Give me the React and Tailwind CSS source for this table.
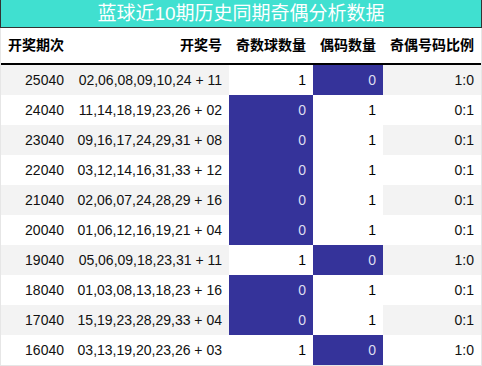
const rows = [
  ['25040', '02,06,08,09,10,24 + 11', 1, 0, '1:0'],
  ['24040', '11,14,18,19,23,26 + 02', 0, 1, '0:1'],
  ['23040', '09,16,17,24,29,31 + 08', 0, 1, '0:1'],
  ['22040', '03,12,14,16,31,33 + 12', 0, 1, '0:1'],
  ['21040', '02,06,07,24,28,29 + 16', 0, 1, '0:1'],
  ['20040', '01,06,12,16,19,21 + 04', 0, 1, '0:1'],
  ['19040', '05,06,09,18,23,31 + 11', 1, 0, '1:0'],
  ['18040', '01,03,08,13,18,23 + 16', 0, 1, '0:1'],
  ['17040', '15,19,23,28,29,33 + 04', 0, 1, '0:1'],
  ['16040', '03,13,19,20,23,26 + 03', 1, 0, '1:0'],
];

const font = { fontFamily: '"Liberation Sans", "Noto Sans CJK SC", sans-serif' };

function CountCell({ value }) {
  return value === 0 ? (
    <div className="bg-[#35339a] text-[#dcdcf0] flex items-center justify-end pr-[7px]">0</div>
  ) : (
    <div className="bg-white text-black flex items-center justify-end pr-[7px]">{value}</div>
  );
}

export default function App() {
  return (
    <div className="w-[482px] h-[366px] bg-white text-[14px]" style={font}>
      <div className="h-[28px] bg-[#40e0d0] border border-t-0 border-[#333] flex items-center justify-center text-white text-[19px] leading-none">
        蓝球近10期历史同期奇偶分析数据
      </div>
      <div className="border-x border-b border-[#e6e6e6]">
        <div className="grid grid-cols-[70px_158px_84px_70px_98px] h-[37px] border-b-2 border-black font-bold text-black">
          <div className="flex items-center justify-end pr-[7px]">开奖期次</div>
          <div className="flex items-center justify-end pr-[7px]">开奖号</div>
          <div className="flex items-center justify-end pr-[7px]">奇数球数量</div>
          <div className="flex items-center justify-end pr-[7px]">偶码数量</div>
          <div className="flex items-center justify-end pr-[7px]">奇偶号码比例</div>
        </div>
        {rows.map((r, i) => {
          const bg = i % 2 === 0 ? 'bg-[#f3f3f3]' : 'bg-white';
          return (
            <div key={r[0]} className="grid grid-cols-[70px_158px_84px_70px_98px] h-[30px] text-[#111]">
              <div className={`${bg} flex items-center justify-end pr-[7px]`}>{r[0]}</div>
              <div className={`${bg} flex items-center justify-end pr-[7px]`}>{r[1]}</div>
              <CountCell value={r[2]} />
              <CountCell value={r[3]} />
              <div className={`${bg} flex items-center justify-end pr-[7px]`}>{r[4]}</div>
            </div>
          );
        })}
      </div>
    </div>
  );
}
